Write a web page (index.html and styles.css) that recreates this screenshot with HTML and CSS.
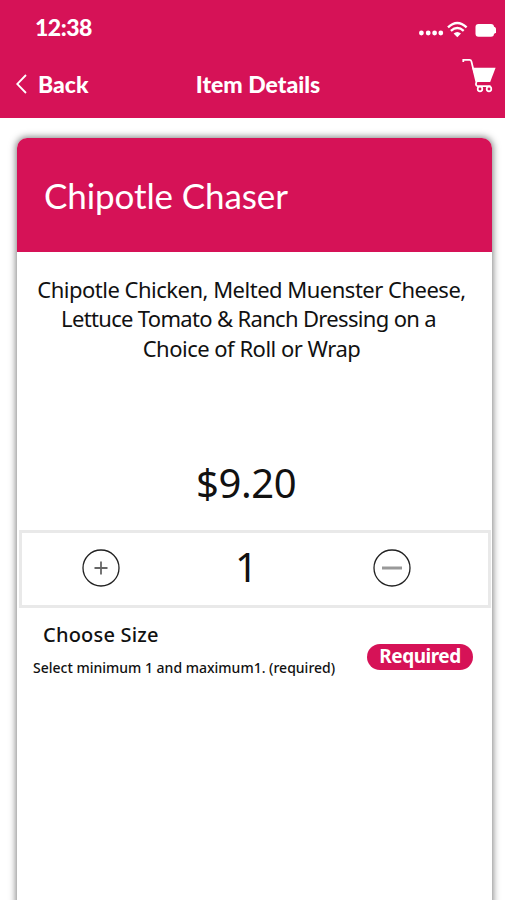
FILE: index.html
```html
<!DOCTYPE html>
<html lang="en">
<head>
    <meta charset="UTF-8">
    <meta name="viewport" content="width=device-width, initial-scale=1.0">
    <title>Item Details</title>
    <link rel="stylesheet" href="styles.css">
</head>
<body>
    <header class="top">
        <div class="status">
            <span class="time">12:38</span>
            <svg class="signal" width="78" height="18" viewBox="0 0 78 18">
                <g fill="#fff">
                    <circle cx="3.4" cy="12" r="2.4"/>
                    <circle cx="10.2" cy="12" r="2.4"/>
                    <circle cx="16.6" cy="12" r="2.4"/>
                    <circle cx="22.8" cy="12" r="2.4"/>
                    <path d="M35.6 12.4q3.7-3 7.4 0l-3.7 3.8z"/>
                    <rect x="57.5" y="3" width="18.5" height="12.8" rx="3"/>
                    <path d="M75 5.5q3.3 0 3.3 3.8T75 13z"/>
                </g>
                <g fill="none" stroke="#fff" stroke-width="2.4">
                    <path d="M30 6.4q9.3-8.6 18.6 0"/>
                    <path d="M32.9 9.8q6.4-5.4 12.8 0"/>
                </g>
            </svg>
        </div>
        <nav class="bar">
            <a class="back">
                <svg width="11" height="20" viewBox="0 0 11 20"><path d="M10 1L1.2 10l8.8 9" fill="none" stroke="#fff" stroke-width="1.8"/></svg>
                <span>Back</span>
            </a>
            <h1>Item Details</h1>
            <svg class="cart" width="34" height="35" viewBox="0 0 34 35">
                <path d="M10.2 9.7h23.4l-5.4 14.3H14.8z" fill="#fff"/>
                <path d="M1.3 4V1.8h6.3q1.4 0 1.8 1.6l5 20.6q-1.4 4 1.5 4.2H28.6" fill="none" stroke="#fff" stroke-width="1.8"/>
                <circle cx="18" cy="31" r="2.3" fill="none" stroke="#fff" stroke-width="1.7"/>
                <circle cx="27" cy="31" r="2.3" fill="none" stroke="#fff" stroke-width="1.7"/>
            </svg>
        </nav>
    </header>

    <main class="card">
        <h2>Chipotle Chaser</h2>
        <p class="description">
            <span class="line1">Chipotle Chicken, Melted Muenster Cheese,</span><br>
            <span class="line2">Lettuce Tomato &amp; Ranch Dressing on a</span><br>
            <span class="line3">Choice of Roll or Wrap</span>
        </p>
        <div class="price">$9.20</div>
        <div class="quantity">
            <svg width="38" height="38" viewBox="0 0 38 38">
                <circle cx="19" cy="19" r="18" fill="none" stroke="#222" stroke-width="1.3"/>
                <path d="M12.5 19h13M19 12.5v13" stroke="#666" stroke-width="1.8"/>
            </svg>
            <span class="count">1</span>
            <svg width="38" height="38" viewBox="0 0 38 38">
                <circle cx="19" cy="19" r="18" fill="none" stroke="#222" stroke-width="1.3"/>
                <path d="M9 19h20" stroke="#999" stroke-width="3"/>
            </svg>
        </div>
        <section class="option">
            <div>
                <h3>Choose Size</h3>
                <p class="hint">Select minimum 1 and maximum1. (required)</p>
            </div>
            <span class="badge">Required</span>
        </section>
    </main>
</body>
</html>
```

FILE: styles.css
```css
* {
    box-sizing: border-box;
}
body {
    margin: 0;
    height: 900px;
    overflow: hidden;
    background-color: #fff;
    font-family: "Noto Sans", sans-serif;
    color: #111;
}
h1, h2, h3, p {
    margin: 0;
}
svg {
    display: block;
    flex: none;
}
.top {
    height: 118px;
    margin-right: 1px;
    background-color: #d61257;
    color: #fff;
    font-family: Lato, sans-serif;
}
.status {
    display: flex;
    justify-content: space-between;
    height: 54px;
    padding: 13px 9px 0 35px;
}
.time {
    font-size: 23px;
    line-height: 28px;
    font-weight: 900;
    letter-spacing: -0.5px;
}
.signal {
    margin-top: 8px;
}
.bar {
    display: grid;
    grid-template-columns: 1fr auto 1fr;
    padding: 4px 9px 0 16px;
}
.back {
    display: flex;
    align-items: center;
    gap: 11px;
    height: 51px;
    font-size: 23px;
    font-weight: 900;
}
.bar h1 {
    padding-left: 4px;
    font-size: 23px;
    line-height: 53px;
    font-weight: 900;
}
.cart {
    justify-self: end;
}
.card {
    width: 475px;
    height: 800px;
    margin: 20px 0 0 17px;
    border-radius: 10px 10px 0 0;
    box-shadow: 0 0 7px 1px rgba(0, 0, 0, 0.5);
}
.card h2 {
    height: 114px;
    padding-left: 27px;
    border-radius: 10px 10px 0 0;
    background-color: #d61257;
    color: #fff;
    font: 400 35px/114px Lato, sans-serif;
    letter-spacing: -0.1px;
}
.description {
    height: 193px;
    padding: 23px 6px 0 0;
    font-size: 22px;
    line-height: 29.4px;
    text-align: center;
    white-space: nowrap;
}
.line1, .line3 {
    letter-spacing: -0.5px;
}
.line2 {
    margin-right: 6px;
    letter-spacing: -0.67px;
}
.price {
    height: 85px;
    padding-left: 179px;
    font-size: 40px;
    line-height: 76px;
    letter-spacing: -0.4px;
}
.quantity {
    display: flex;
    justify-content: space-between;
    align-items: center;
    height: 78px;
    margin: 0 1px 0 2px;
    padding: 0 77px 2px 60px;
    border: 3px solid #e9e9e9;
}
.count {
    font-size: 40px;
    line-height: 68px;
    margin-bottom: 2px;
}
.option {
    display: flex;
    justify-content: space-between;
    padding: 13px 19px 0 16px;
}
.option h3 {
    padding-left: 10px;
    font-size: 20px;
    line-height: 28px;
    font-weight: 500;
    letter-spacing: 0.2px;
}
.hint {
    margin-top: 9px;
    font-size: 14px;
    line-height: 20px;
    font-weight: 500;
    white-space: nowrap;
}
.badge {
    width: 106px;
    height: 26px;
    margin-top: 23px;
    border-radius: 13px;
    background-color: #d61257;
    color: #fff;
    font-size: 19px;
    line-height: 25px;
    font-weight: 700;
    letter-spacing: -0.5px;
    text-align: center;
}
```
